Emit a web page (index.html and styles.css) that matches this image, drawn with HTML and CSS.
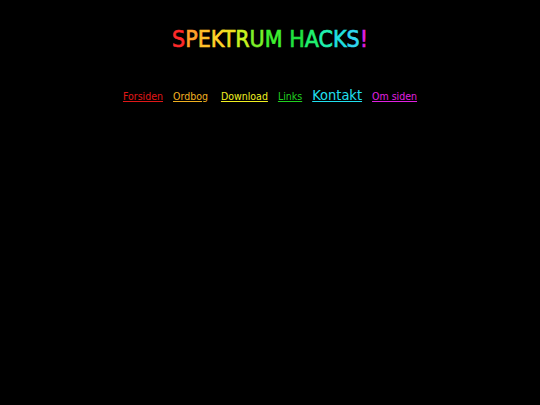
FILE: index.html
```html
<!DOCTYPE html>
<html>
<head>
<meta charset="utf-8">
<link rel="stylesheet" href="styles.css">
</head>
<body>
<h1 class="title"><span class="c1">S</span><span class="c2">P</span><span class="c3">E</span><span class="c4">K</span><span class="c5">T</span><span class="c6">R</span><span class="c7">U</span><span class="c8">M</span> <span class="c9">H</span><span class="c10">A</span><span class="c11">C</span><span class="c12">K</span><span class="c13">S</span><span class="c14">!</span></h1>
<nav class="nav">
  <a href="#" class="l red">Forsiden</a>
  <a href="#" class="l orange">Ordbog</a>
  <a href="#" class="l yellow">Download</a>
  <a href="#" class="l green">Links</a>
  <a href="#" class="l cyan big">Kontakt</a>
  <a href="#" class="l magenta">Om siden</a>
</nav>
</body>
</html>
```
FILE: styles.css
```css
html, body {
  margin: 0;
  padding: 0;
  background: #000;
  height: 100%;
}
body {
  font-family: "Comic Sans MS", "DejaVu Sans Condensed", "DejaVu Sans", sans-serif;
}
.title {
  margin: 0;
  padding-top: 26px;
  text-align: center;
  font-size: 23px;
  font-weight: normal;
  font-stretch: condensed;
  line-height: 26px;
  -webkit-text-stroke: 0.6px currentColor;
}
.title span { -webkit-text-stroke: 0.6px currentColor; }
.c1 { color: #ff2a2a; }
.c2 { color: #ff9f2a; }
.c3 { color: #ffc02a; }
.c4 { color: #ffd42a; }
.c5 { color: #f0e020; }
.c6 { color: #c8f020; }
.c7 { color: #7ff02a; }
.c8 { color: #40f030; }
.c9 { color: #20e040; }
.c10 { color: #20f070; }
.c11 { color: #20f0b0; }
.c12 { color: #20e0e0; }
.c13 { color: #30d8f0; }
.c14 { color: #e020e0; }
.nav {
  margin-top: 35px;
  display: flex;
  justify-content: center;
  align-items: baseline;
  gap: 10px;
}
.l {
  font-size: 10.5px;
  font-stretch: condensed;
  text-decoration: underline;
}
.big { font-size: 14.5px; }
.red { color: #e01818; }
.orange { color: #f0b020; }
.yellow { color: #f0f020; margin-left: 3px; }
.green { color: #20d020; }
.cyan { color: #20e0f0; }
.magenta { color: #e020e0; }
```
